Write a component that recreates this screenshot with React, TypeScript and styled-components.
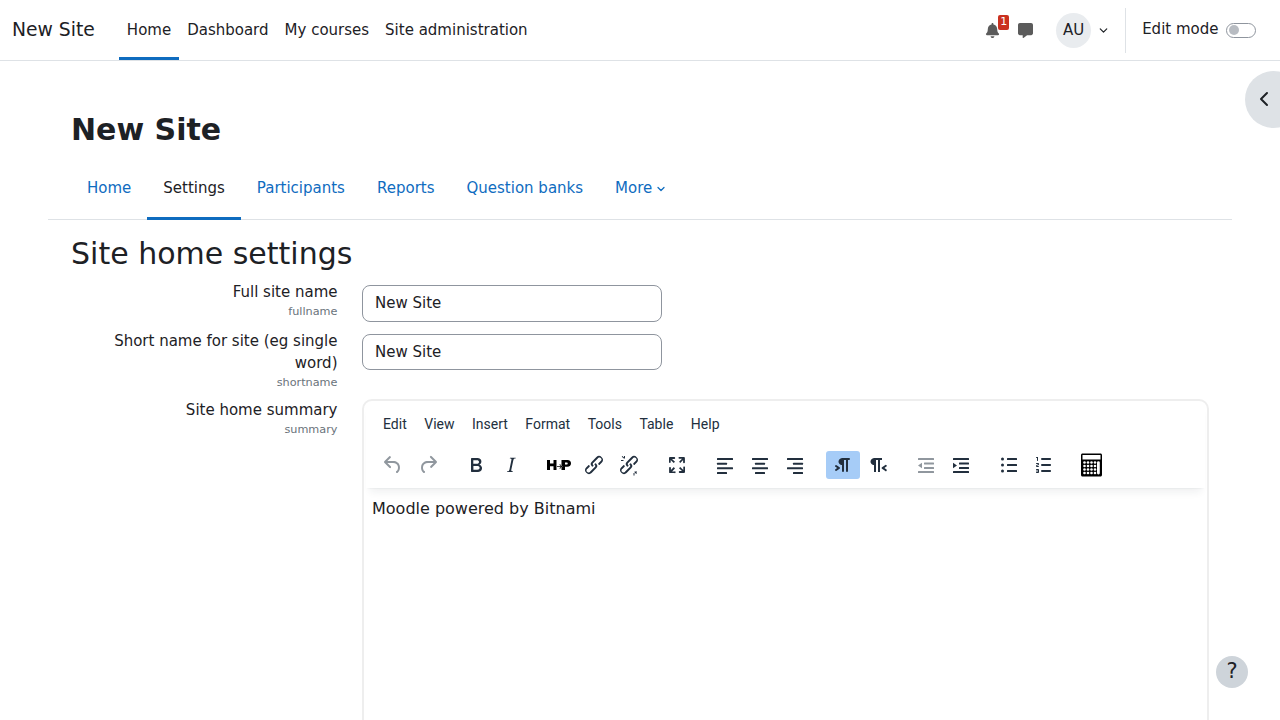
import {FC, ReactNode} from 'react'
import styled, {createGlobalStyle} from 'styled-components'
import {FaBell} from 'react-icons/fa'
import {FaMessage} from 'react-icons/fa6'
import {ChevronDown, ChevronLeft} from 'lucide-react'

const GlobalStyle = createGlobalStyle`
  html, body {
    margin: 0;
    height: 720px;
    overflow: hidden;
    background: #fff;
  }

  body {
    font-family: "DejaVu Sans", sans-serif;
    font-size: 15px;
    line-height: 22.5px;
    color: #1d2125;
  }
`

const PrimaryItems = ['Home', 'Dashboard', 'My courses', 'Site administration']
const TabItems = ['Home', 'Settings', 'Participants', 'Reports', 'Question banks']
const MenuItems = ['Edit', 'View', 'Insert', 'Format', 'Tools', 'Table', 'Help']

const Bars: FC<{rows: [number, number][]}> = ({rows}) => (
  <>
    {rows.map(([x, w], i) => (
      <rect key={i} x={x} y={5 + i * 4.67} width={w} height={2} rx={.5}/>
    ))}
  </>
)

const Icons: Record<string, ReactNode> = {
  undo: <path d="M6.4 8H12c3.7 0 6.2 2 6.8 5.1.6 2.7-.4 5.6-2.3 6.8a1 1 0 0 1-1-1.8c1.1-.6 1.8-2.7 1.4-4.6-.5-2.1-2.1-3.5-4.9-3.5H6.4l3.3 3.3a1 1 0 1 1-1.4 1.4l-5-5a1 1 0 0 1 0-1.4l5-5a1 1 0 0 1 1.4 1.4L6.4 8Z"/>,
  redo: <path d="M17.6 10H12c-2.8 0-4.4 1.4-4.9 3.5-.4 2 .3 4 1.4 4.6a1 1 0 1 1-1 1.8c-2-1.2-2.9-4.1-2.3-6.8.6-3 3-5.1 6.8-5.1h5.6l-3.3-3.3a1 1 0 1 1 1.4-1.4l5 5a1 1 0 0 1 0 1.4l-5 5a1 1 0 0 1-1.4-1.4l3.3-3.3Z"/>,
  bold: <path d="M7.8 19c-.3 0-.5 0-.6-.2l-.2-.5V5.7c0-.2 0-.4.2-.5l.6-.2h5c1.5 0 2.7.3 3.5 1 .7.6 1.1 1.4 1.1 2.5a3 3 0 0 1-.6 1.9c-.4.6-1 1-1.6 1.2.4.1.9.3 1.3.6s.8.7 1 1.2c.4.4.5 1 .5 1.6 0 1.3-.4 2.3-1.3 3-.8.7-2.1 1-3.8 1H7.8Zm5-8.3c.6 0 1.2-.1 1.6-.5.4-.3.6-.7.6-1.3 0-1.1-.8-1.7-2.3-1.7H9.3v3.5h3.4Zm.5 6c.7 0 1.3-.1 1.7-.4.4-.4.6-.9.6-1.5s-.2-1-.7-1.4c-.4-.3-1-.4-2-.4H9.4v3.8h4Z"/>,
  italic: <path d="M16.7 4.7l-.1.9h-.3c-.6 0-1 0-1.4.3-.3.3-.4.6-.5 1.1l-2.1 9.8v.6c0 .5.4.8 1.4.8h.2l-.2.8H8l.2-.8h.2c1.1 0 1.8-.5 2-1.5l2-9.8.1-.5c0-.6-.4-.8-1.4-.8h-.3l.2-.9h5.8Z"/>,
  h5p: (
    <g fill="#000">
      <path d="M0 7h3v3.5h3.5V7h3v10h-3v-3.8H3V17H0Z"/>
      <path d="M14.5 7h6c2.3 0 3.5 1.3 3.5 3.3s-1.3 3.4-3.6 3.4H18V17h-3.5Zm3.5 2.4v2h1.6c.7 0 1.1-.4 1.1-1s-.4-1-1.1-1Z"/>
      <path d="M9.5 13h4l-1.2-1.2.7-.7 2.4 2.4-2.4 2.4-.7-.7 1.2-1.2h-4Z" stroke="#fff" strokeWidth=".3"/>
    </g>
  ),
  link: <path d="M6.2 12.3a1 1 0 0 1 1.4 1.4l-2 2a2 2 0 1 0 2.6 2.8l4.8-4.8a1 1 0 0 0 0-1.4 1 1 0 1 1 1.4-1.3 2.9 2.9 0 0 1 0 4L9.6 20a3.9 3.9 0 0 1-5.5-5.5l2-2Zm11.6-.6a1 1 0 0 1-1.4-1.4l2-2a2 2 0 1 0-2.6-2.8L11 10.3a1 1 0 0 0 0 1.4A1 1 0 1 1 9.6 13a2.9 2.9 0 0 1 0-4L14.4 4a3.9 3.9 0 0 1 5.5 5.5l-2 2Z"/>,
  unlink: (
    <>
      <path d="M6.2 12.3a1 1 0 0 1 1.4 1.4l-2 2a2 2 0 1 0 2.6 2.8l4.8-4.8a1 1 0 0 0 0-1.4 1 1 0 1 1 1.4-1.3 2.9 2.9 0 0 1 0 4L9.6 20a3.9 3.9 0 0 1-5.5-5.5l2-2Zm11.6-.6a1 1 0 0 1-1.4-1.4l2-2a2 2 0 1 0-2.6-2.8L11 10.3a1 1 0 0 0 0 1.4A1 1 0 1 1 9.6 13a2.9 2.9 0 0 1 0-4L14.4 4a3.9 3.9 0 0 1 5.5 5.5l-2 2Z"/>
      <path d="M4 7h2.5v1H4Zm3-4h1v2.5H7Zm-2.3.6.7-.7 1.8 1.8-.7.7ZM17.5 19.5h2.5v-1h-2.5Zm-1 .5h1v2.5h-1Zm2.7 1.1.7-.7-1.8-1.8-.7.7Z"/>
    </>
  ),
  fullscreen: <path d="M15.3 10l-1.2-1.3 2.9-3h-2.3a.9.9 0 1 1 0-1.7H19c.5 0 .9.4.9.9v4.4a.9.9 0 1 1-1.8 0V7l-2.8 3ZM15.3 14l3 3v-2.3a.9.9 0 1 1 1.7 0V19c0 .5-.4.9-.9.9h-4.4a.9.9 0 1 1 0-1.8H17l-3-2.9 1.3-1.2ZM10 15.4l-2.9 3h2.3a.9.9 0 1 1 0 1.7H5a.9.9 0 0 1-.9-.9v-4.4a.9.9 0 1 1 1.8 0V17l2.9-3 1.2 1.4ZM8.7 10L5.7 7v2.3a.9.9 0 0 1-1.7 0V5c0-.5.4-.9.9-.9h4.4a.9.9 0 0 1 0 1.8H7l3 2.9-1.3 1.2Z"/>,
  alignLeft: <Bars rows={[[4, 16], [4, 10], [4, 16], [4, 10]]}/>,
  alignCenter: <Bars rows={[[4, 16], [7, 10], [4, 16], [7, 10]]}/>,
  alignRight: <Bars rows={[[4, 16], [10, 10], [4, 16], [10, 10]]}/>,
  ltr: <path d="M11 5h7a1 1 0 0 1 0 2h-1v11a1 1 0 0 1-2 0V7h-2v11a1 1 0 0 1-2 0v-6c-.5 0-1 0-1.4-.3A3.4 3.4 0 0 1 7.8 10a3.3 3.3 0 0 1 0-2.8 3.4 3.4 0 0 1 1.8-1.8L11 5ZM4.4 16.2 6.2 15l-1.8-1.2a1 1 0 0 1 1.2-1.6l3 2a1 1 0 0 1 0 1.6l-3 2a1 1 0 1 1-1.2-1.6Z"/>,
  rtl: <path d="M8 5h8v2h-2v12h-2V7h-2v12H8v-7c-.5 0-1 0-1.4-.3A3.4 3.4 0 0 1 4.8 10a3.3 3.3 0 0 1 0-2.8 3.4 3.4 0 0 1 1.8-1.8L8 5Zm12 11.2a1 1 0 1 1-1 1.6l-3-2a1 1 0 0 1 0-1.6l3-2a1 1 0 1 1 1 1.6L18.4 15l1.8 1.2Z"/>,
  outdent: (
    <>
      <rect x="4" y="5" width="16" height="2" rx=".5"/>
      <rect x="10" y="9.5" width="10" height="2" rx=".5"/>
      <rect x="10" y="14" width="10" height="2" rx=".5"/>
      <rect x="4" y="18" width="16" height="2" rx=".5"/>
      <path d="M8 9.7v5.6L4 12.5Z"/>
    </>
  ),
  indent: (
    <>
      <rect x="4" y="5" width="16" height="2" rx=".5"/>
      <rect x="10" y="9.5" width="10" height="2" rx=".5"/>
      <rect x="10" y="14" width="10" height="2" rx=".5"/>
      <rect x="4" y="18" width="16" height="2" rx=".5"/>
      <path d="M4 9.7v5.6L8 12.5Z"/>
    </>
  ),
  bullist: (
    <>
      <rect x="10" y="5" width="10" height="2" rx=".5"/>
      <rect x="10" y="11" width="10" height="2" rx=".5"/>
      <rect x="10" y="17" width="10" height="2" rx=".5"/>
      <circle cx="5.5" cy="6" r="1.5"/>
      <circle cx="5.5" cy="12" r="1.5"/>
      <circle cx="5.5" cy="18" r="1.5"/>
    </>
  ),
  numlist: <path d="M10 17h8c.6 0 1 .4 1 1s-.4 1-1 1h-8a1 1 0 0 1 0-2Zm0-6h8c.6 0 1 .4 1 1s-.4 1-1 1h-8a1 1 0 0 1 0-2Zm0-6h8c.6 0 1 .4 1 1s-.4 1-1 1h-8a1 1 0 1 1 0-2ZM6 4v3.5c0 .3-.2.5-.5.5a.5.5 0 0 1-.5-.5V5h-.5a.5.5 0 0 1 0-1H6Zm-1 8.8.2.2h1.3c.3 0 .5.2.5.5s-.2.5-.5.5H4.9a1 1 0 0 1-.9-1V13c0-.4.3-.8.6-1l1.2-.4.2-.3a.2.2 0 0 0-.2-.2H4.5a.5.5 0 0 1-.5-.5c0-.3.2-.5.5-.5h1.6c.5 0 .9.4.9 1v.1c0 .4-.3.8-.6 1l-1.2.4-.2.3ZM7 17v2c0 .6-.4 1-1 1H4.5a.5.5 0 0 1 0-1h1.2c.2 0 .3-.1.3-.3 0-.2-.1-.3-.3-.3H4.4a.4.4 0 1 1 0-.8h1.3c.2 0 .3-.1.3-.3 0-.2-.1-.3-.3-.3H4.5a.5.5 0 1 1 0-1H6c.6 0 1 .4 1 1Z"/>,
  calc: (
    <g fill="#000">
      <path fillRule="evenodd" d="M2.5.5h18c.8 0 1.5.7 1.5 1.5v20c0 .8-.7 1.5-1.5 1.5h-18c-.8 0-1.5-.7-1.5-1.5V2c0-.8.7-1.5 1.5-1.5Zm0 1.5v4.500h18V2Z"/>
      {[9.5, 13, 16.5, 20].flatMap((y) =>
        [4.5, 8, 11.5, 15].map((x) => <circle key={`${x}-${y}`} cx={x} cy={y} r="1.3" fill="#fff"/>)
      )}
      <rect x="17" y="8.2" width="2.8" height="13.2" rx="1.3" fill="#fff"/>
    </g>
  ),
}

const ToolbarGroups: {name: string; disabled?: boolean; active?: boolean}[][] = [
  [{name: 'undo', disabled: true}, {name: 'redo', disabled: true}],
  [{name: 'bold'}, {name: 'italic'}],
  [{name: 'h5p'}, {name: 'link'}, {name: 'unlink'}],
  [{name: 'fullscreen'}],
  [{name: 'alignLeft'}, {name: 'alignCenter'}, {name: 'alignRight'}],
  [{name: 'ltr', active: true}, {name: 'rtl'}],
  [{name: 'outdent', disabled: true}, {name: 'indent'}],
  [{name: 'bullist'}, {name: 'numlist'}],
  [{name: 'calc'}],
]

const App: FC = () => {
  return (
    <>
      <GlobalStyle/>
      <Navbar>
        <Brand>New Site</Brand>
        <PrimaryNav>
          {PrimaryItems.map((item, i) => (
            <PrimaryLink key={item} active={i === 0}>{item}</PrimaryLink>
          ))}
        </PrimaryNav>
        <UserArea>
          <NavIcon>
            <FaBell size={15}/>
            <Badge>1</Badge>
          </NavIcon>
          <NavIcon>
            <FaMessage size={15}/>
          </NavIcon>
          <UserMenu>
            <Avatar>AU</Avatar>
            <ChevronDown size={13} strokeWidth={2.2}/>
          </UserMenu>
          <Divider/>
          <EditMode>
            Edit mode
            <Toggle><Knob/></Toggle>
          </EditMode>
        </UserArea>
      </Navbar>

      <Page>
        <PageHeading>New Site</PageHeading>
        <Tabs>
          {TabItems.map((item) => (
            <Tab key={item} active={item === 'Settings'}>{item}</Tab>
          ))}
          <Tab>
            More
            <ChevronDown size={12} strokeWidth={2.5}/>
          </Tab>
        </Tabs>

        <Content>
          <SectionTitle>Site home settings</SectionTitle>
          <FormRow>
            <LabelCell>
              <Label>Full site name</Label>
              <FieldName>fullname</FieldName>
            </LabelCell>
            <Input>New Site</Input>
          </FormRow>
          <FormRow spacing={8}>
            <LabelCell>
              <Label>Short name for site (eg single word)</Label>
              <FieldName>shortname</FieldName>
            </LabelCell>
            <Input short>New Site</Input>
          </FormRow>
          <FormRow>
            <LabelCell nudge={0}>
              <Label>Site home summary</Label>
              <FieldName>summary</FieldName>
            </LabelCell>
            <Editor>
              <EditorHeader>
                <MenuBar>
                  {MenuItems.map((item) => <MenuItem key={item}>{item}</MenuItem>)}
                </MenuBar>
                <Toolbar>
                  {ToolbarGroups.map((group) => (
                    <ToolGroup key={group[0].name}>
                      {group.map((tool) => (
                        <ToolButton key={tool.name} disabled={tool.disabled} active={tool.active}>
                          <svg width="24" height="24" viewBox="0 0 24 24">{Icons[tool.name]}</svg>
                        </ToolButton>
                      ))}
                    </ToolGroup>
                  ))}
                </Toolbar>
              </EditorHeader>
              <EditorBody>Moodle powered by Bitnami</EditorBody>
            </Editor>
          </FormRow>
        </Content>
      </Page>

      <DrawerToggle>
        <ChevronLeft size={24} strokeWidth={2}/>
      </DrawerToggle>
      <HelpButton>?</HelpButton>
    </>
  )
}

export default App

const Navbar = styled.header`
  display: flex;
  align-items: center;
  height: 60px;
  padding: 0 24px 0 12px;
  border-bottom: 1px solid #dee2e6;
`

const Brand = styled.div`
  font-size: 18.75px;
  margin-right: 24px;
  color: #1d2125;
`

const PrimaryNav = styled.nav`
  display: flex;
  align-self: stretch;
`

const PrimaryLink = styled.a<{active?: boolean}>`
  display: flex;
  align-items: center;
  padding: 0 8px;
  border-bottom: 3px solid ${p => p.active ? '#0f6cbf' : 'transparent'};
  border-top: 3px solid transparent;
`

const UserArea = styled.div`
  display: flex;
  align-items: center;
  margin-left: auto;
`

const NavIcon = styled.div`
  position: relative;
  display: flex;
  align-items: center;
  justify-content: center;
  width: 33px;
  color: #5b5b5b;
`

const Badge = styled.span`
  position: absolute;
  top: -8px;
  left: 22px;
  width: 11px;
  height: 15px;
  border-radius: 2px;
  background: #ca3120;
  color: #fff;
  font-size: 11px;
  line-height: 14px;
  text-align: center;
`

const UserMenu = styled.div`
  display: flex;
  align-items: center;
  gap: 6px;
  margin-left: 14px;
  color: #1d2125;
`

const Avatar = styled.div`
  display: flex;
  align-items: center;
  justify-content: center;
  width: 35px;
  height: 35px;
  border-radius: 50%;
  background: #e9ecef;
  font-size: 15px;
`

const Divider = styled.div`
  width: 1px;
  height: 45px;
  margin: 0 16px 0 15px;
  background: #dee2e6;
`

const EditMode = styled.div`
  display: flex;
  align-items: center;
  gap: 7.5px;
  margin-top: -2px;
`

const Toggle = styled.div`
  display: flex;
  align-items: center;
  box-sizing: border-box;
  width: 30px;
  height: 15px;
  margin-top: 2px;
  padding-left: 2px;
  border: 1px solid #8f959e;
  border-radius: 8px;
`

const Knob = styled.div`
  width: 10px;
  height: 10px;
  border-radius: 50%;
  background: #b8bcc2;
`

const Page = styled.main`
  padding: 0 48px;
`

const PageHeading = styled.h1`
  margin: 0;
  padding: 51px 0 0 23px;
  font-size: 30px;
  line-height: 36px;
  font-weight: 700;
`

const Tabs = styled.nav`
  display: flex;
  align-items: stretch;
  height: 61px;
  margin-top: 10px;
  padding-left: 23px;
  border-bottom: 1px solid #dee2e6;
`

const Tab = styled.a<{active?: boolean}>`
  display: flex;
  align-items: center;
  gap: 3px;
  height: 57px;
  padding: 2px 16px 0;
  border-bottom: 3px solid ${p => p.active ? '#0f6cbf' : 'transparent'};
  color: ${p => p.active ? '#1d2125' : '#0f6cbf'};
`

const Content = styled.section`
  padding: 16px 23px 0;
`

const SectionTitle = styled.h2`
  margin: 0 0 13px;
  font-size: 30px;
  line-height: 36px;
  font-weight: 400;
`

const FormRow = styled.div<{spacing?: number}>`
  display: grid;
  grid-template-columns: 266.5px 1fr;
  column-gap: 24.5px;
  margin-bottom: ${p => p.spacing ?? 12}px;
`

const LabelCell = styled.div<{nudge?: number}>`
  margin-top: ${p => p.nudge ?? -4}px;
  text-align: right;
`

const Label = styled.div`
  line-height: 22px;
`

const FieldName = styled.div`
  font-size: 11.25px;
  line-height: 17px;
  color: #6a737b;
`

const Input = styled.div<{short?: boolean}>`
  box-sizing: border-box;
  width: 300px;
  height: ${p => p.short ? 36 : 37}px;
  padding: 6px 12px;
  border: 1px solid #8f959e;
  border-radius: 8px;
`

const Editor = styled.div`
  box-sizing: border-box;
  height: 600px;
  border: 2px solid #eee;
  border-radius: 10px;
  overflow: hidden;
`

const EditorHeader = styled.div`
  position: relative;
  height: 87px;
  margin: 0 2px;
  box-shadow: 0 2px 2px -2px rgba(34, 47, 62, 0.1), 0 8px 8px -4px rgba(34, 47, 62, 0.07);
`

const MenuBar = styled.div`
  display: flex;
  gap: 17.5px;
  padding: 11px 0 0 17px;
  height: 32px;
  font-family: "Roboto", sans-serif;
  font-size: 14px;
  line-height: 24px;
  color: #222f3e;
`

const MenuItem = styled.span``

const Toolbar = styled.div`
  display: flex;
  gap: 14px;
  padding: 7px 0 0 10px;
`

const ToolGroup = styled.div`
  display: flex;
  gap: 1px;
`

const ToolButton = styled.div<{disabled?: boolean; active?: boolean}>`
  display: flex;
  align-items: center;
  justify-content: center;
  width: 34px;
  height: 28px;
  border-radius: 3px;
  background: ${p => p.active ? '#a6ccf7' : 'transparent'};

  svg {
    fill: ${p => p.disabled ? 'rgba(34, 47, 62, 0.5)' : '#222f3e'};
  }
`

const EditorBody = styled.div`
  padding: 10px 8px;
  font-size: 16px;
  line-height: 22px;
`

const DrawerToggle = styled.div`
  position: absolute;
  top: 71px;
  left: 1245px;
  width: 57px;
  height: 57px;
  padding: 0 0 2px 7px;
  box-sizing: border-box;
  display: flex;
  align-items: center;
  border-radius: 50%;
  background: #dee2e6;
`

const HelpButton = styled.div`
  position: absolute;
  top: 656px;
  left: 1216px;
  width: 32px;
  height: 32px;
  border-radius: 50%;
  background: #ced4da;
  font-size: 21px;
  line-height: 31px;
  text-align: center;
`
